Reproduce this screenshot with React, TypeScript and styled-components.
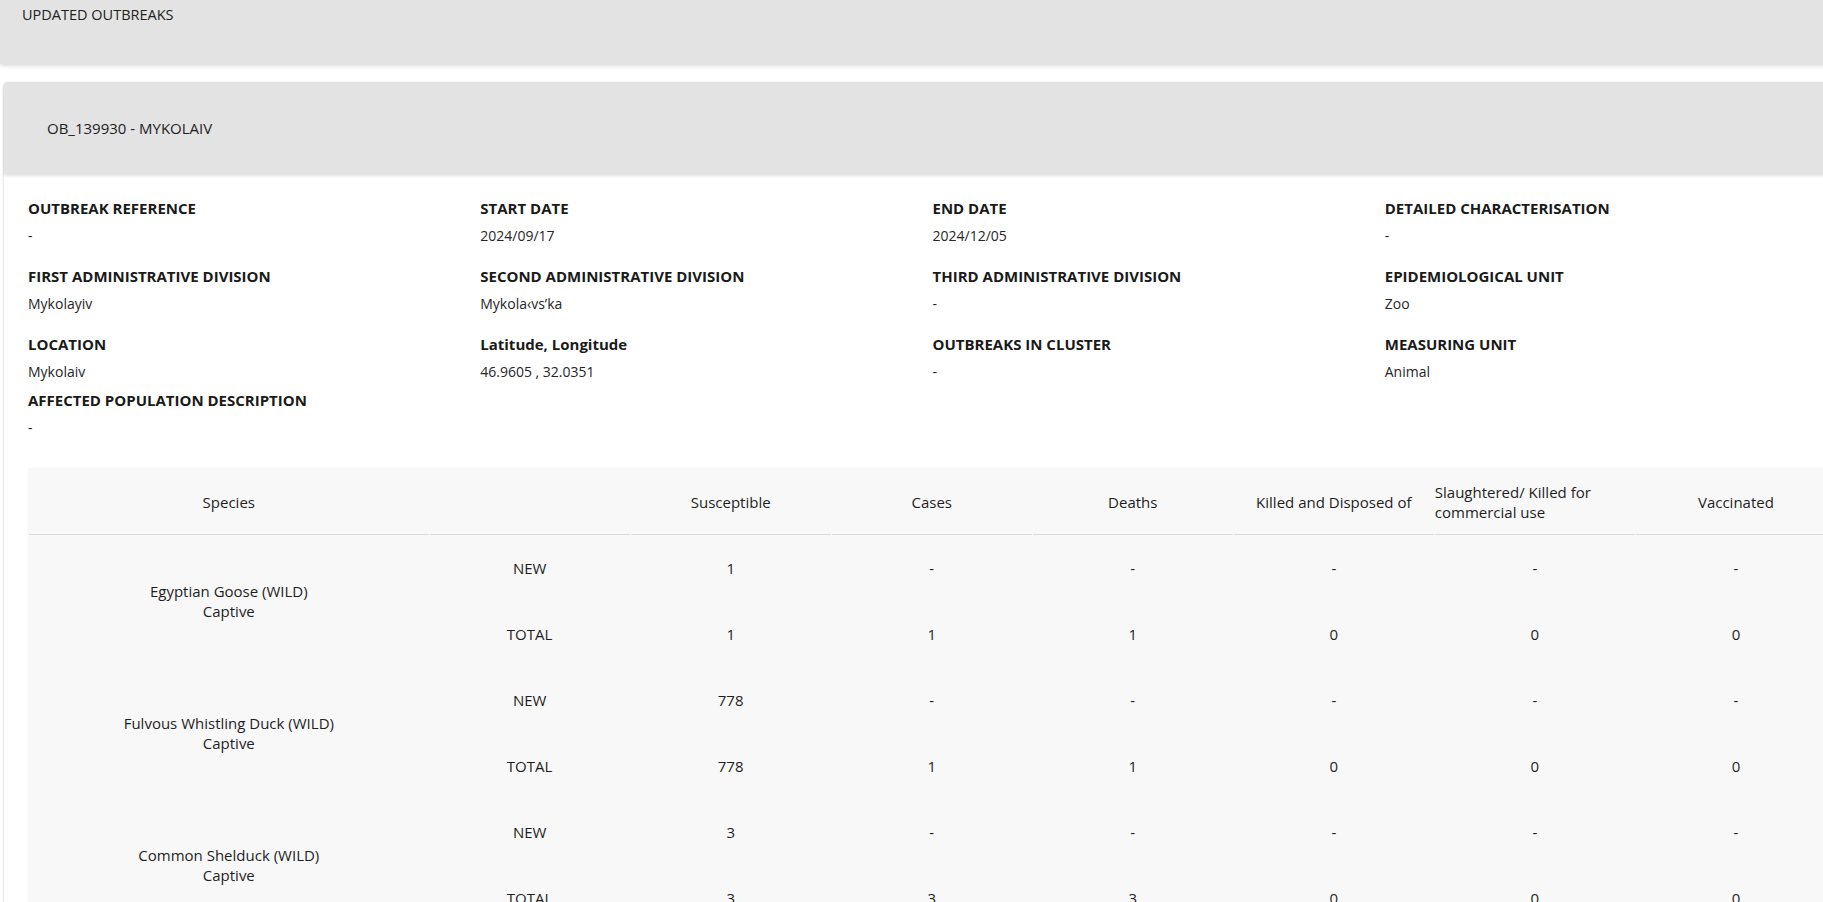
import React from 'react';
import styled, { createGlobalStyle } from 'styled-components';

const GlobalStyle = createGlobalStyle`
  html, body {
    margin: 0;
    padding: 0;
    overflow: hidden;
    background: #fff;
  }
  body {
    font-family: 'Open Sans', 'Liberation Sans', sans-serif;
    color: #212121;
  }
`;

const Page = styled.div`
  width: 1866px;
`;

const TopBar = styled.header`
  height: 64px;
  box-sizing: border-box;
  padding: 5px 22px;
  background: #e3e3e3;
  box-shadow: 0 2px 4px rgba(0, 0, 0, 0.14);
  font-size: 14.5px;
  line-height: 20px;
`;

const Card = styled.section`
  width: 1857px;
  margin: 18px 0 0 4px;
  background: #fff;
  border-radius: 4px;
  box-shadow: 0 1px 3px rgba(0, 0, 0, 0.2), 0 1px 1px rgba(0, 0, 0, 0.12);
`;

const CardHeader = styled.div`
  height: 92px;
  display: flex;
  align-items: center;
  padding-left: 43px;
  background: #e3e3e3;
  border-radius: 4px 4px 0 0;
  box-shadow: 0 2px 3px rgba(0, 0, 0, 0.12);
  font-size: 15px;
  color: #1e1e1e;
`;

const CardBody = styled.div`
  padding: 23px 24px 0;
`;

const InfoGrid = styled.div`
  display: grid;
  grid-template-columns: repeat(4, 1fr);
  row-gap: 18px;
`;

const InfoItem = styled.div<{ $offset?: number }>`
  margin-top: ${(p) => p.$offset ?? 0}px;
`;

const Label = styled.div`
  font-size: 15px;
  font-weight: 700;
  line-height: 22px;
  color: #1a1a1a;
`;

const Value = styled.div`
  margin-top: 6px;
  font-size: 14px;
  line-height: 22px;
  color: #262626;
`;

const Table = styled.table`
  width: 100%;
  margin-top: 30px;
  table-layout: fixed;
  border-collapse: separate;
  border-spacing: 1px 0;
  background: #f8f8f8;
  box-shadow: 0 -1px 2px rgba(0, 0, 0, 0.04);
`;

const HeadCell = styled.th<{ $left?: boolean }>`
  height: 65px;
  padding: 0;
  border-bottom: 1px solid #dcdcdc;
  font-size: 15px;
  font-weight: 400;
  line-height: 20px;
  text-align: ${(p) => (p.$left ? 'left' : 'center')};
  vertical-align: middle;
  color: #1e1e1e;
`;

const Cell = styled.td`
  height: 66px;
  padding: 0;
  font-size: 15px;
  font-weight: 500;
  line-height: 20px;
  text-align: center;
  vertical-align: middle;
  color: #1e1e1e;
`;

const info: { label: string; value: string }[] = [
  { label: 'OUTBREAK REFERENCE', value: '-' },
  { label: 'START DATE', value: '2024/09/17' },
  { label: 'END DATE', value: '2024/12/05' },
  { label: 'DETAILED CHARACTERISATION', value: '-' },
  { label: 'FIRST ADMINISTRATIVE DIVISION', value: 'Mykolayiv' },
  { label: 'SECOND ADMINISTRATIVE DIVISION', value: 'Mykola‹vs’ka' },
  { label: 'THIRD ADMINISTRATIVE DIVISION', value: '-' },
  { label: 'EPIDEMIOLOGICAL UNIT', value: 'Zoo' },
  { label: 'LOCATION', value: 'Mykolaiv' },
  { label: 'Latitude, Longitude', value: '46.9605 , 32.0351' },
  { label: 'OUTBREAKS IN CLUSTER', value: '-' },
  { label: 'MEASURING UNIT', value: 'Animal' },
];

const species = [
  {
    name: 'Egyptian Goose (WILD)',
    newRow: ['1', '-', '-', '-', '-', '-'],
    totalRow: ['1', '1', '1', '0', '0', '0'],
  },
  {
    name: 'Fulvous Whistling Duck (WILD)',
    newRow: ['778', '-', '-', '-', '-', '-'],
    totalRow: ['778', '1', '1', '0', '0', '0'],
  },
  {
    name: 'Common Shelduck (WILD)',
    newRow: ['3', '-', '-', '-', '-', '-'],
    totalRow: ['3', '3', '3', '0', '0', '0'],
  },
];

export default function App() {
  return (
    <Page>
      <GlobalStyle />
      <TopBar>UPDATED OUTBREAKS</TopBar>
      <Card>
        <CardHeader>OB_139930 - MYKOLAIV</CardHeader>
        <CardBody>
          <InfoGrid>
            {info.map((item) => (
              <InfoItem key={item.label}>
                <Label>{item.label}</Label>
                <Value>{item.value}</Value>
              </InfoItem>
            ))}
          </InfoGrid>
          <InfoItem $offset={6}>
            <Label>AFFECTED POPULATION DESCRIPTION</Label>
            <Value>-</Value>
          </InfoItem>

          <Table>
            <colgroup>
              <col style={{ width: '22.2%' }} />
              <col />
              <col />
              <col />
              <col />
              <col />
              <col />
              <col />
            </colgroup>
            <thead>
              <tr>
                <HeadCell>Species</HeadCell>
                <HeadCell />
                <HeadCell>Susceptible</HeadCell>
                <HeadCell>Cases</HeadCell>
                <HeadCell>Deaths</HeadCell>
                <HeadCell>Killed and Disposed of</HeadCell>
                <HeadCell $left>
                  Slaughtered/ Killed for
                  <br />
                  commercial use
                </HeadCell>
                <HeadCell>Vaccinated</HeadCell>
              </tr>
            </thead>
            <tbody>
              {species.map((s) => (
                <React.Fragment key={s.name}>
                  <tr>
                    <Cell rowSpan={2}>
                      {s.name}
                      <br />
                      Captive
                    </Cell>
                    <Cell>NEW</Cell>
                    {s.newRow.map((v, i) => (
                      <Cell key={i}>{v}</Cell>
                    ))}
                  </tr>
                  <tr>
                    <Cell>TOTAL</Cell>
                    {s.totalRow.map((v, i) => (
                      <Cell key={i}>{v}</Cell>
                    ))}
                  </tr>
                </React.Fragment>
              ))}
            </tbody>
          </Table>
        </CardBody>
      </Card>
    </Page>
  );
}
